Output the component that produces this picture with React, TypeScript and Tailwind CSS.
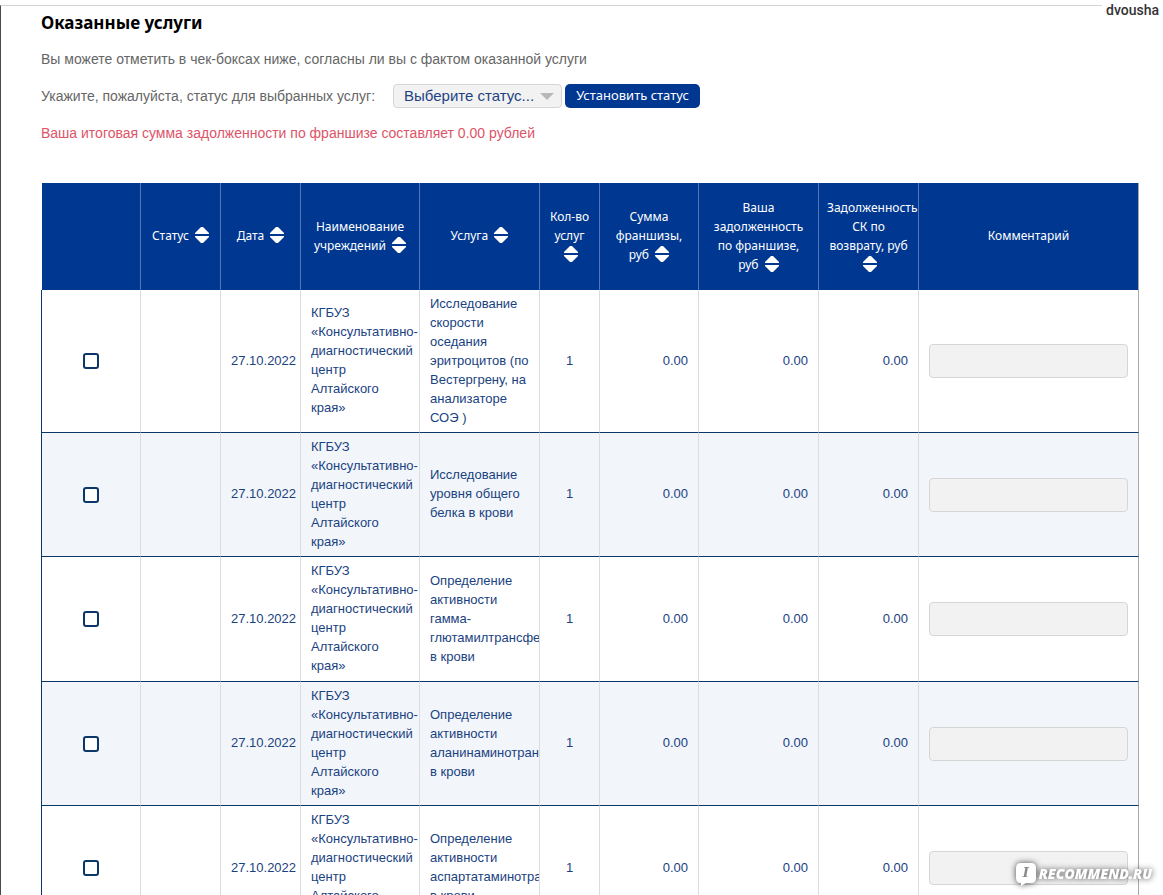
import clsx from "clsx";

const CLINIC = "КГБУЗ «Консультативно-диагностический центр Алтайского края»";

const COLUMNS = [
  { title: "", width: "w-[100px]", sortable: false },
  { title: "Статус", width: "w-[80px]", sortable: true },
  { title: "Дата", width: "w-[80px]", sortable: true },
  { title: "Наименование учреждений", width: "w-[119px]", sortable: true },
  { title: "Услуга", width: "w-[120px]", sortable: true },
  { title: "Кол-во услуг", width: "w-[60px]", sortable: true },
  { title: "Сумма франшизы, руб", width: "w-[99px]", sortable: true },
  { title: "Ваша задолженность по франшизе, руб", width: "w-[120px]", sortable: true },
  { title: "Задолженность СК по возврату, руб", width: "w-[100px]", sortable: true },
  { title: "Комментарий", width: "", sortable: false },
];

const SERVICES = [
  "Исследование скорости оседания эритроцитов (по Вестергрену, на анализаторе СОЭ )",
  "Исследование уровня общего белка в крови",
  "Определение активности гамма-глютамилтрансферазы в крови",
  "Определение активности аланинаминотрансферазы в крови",
  "Определение активности аспартатаминотрансферазы в крови",
];

function SortIcon() {
  return (
    <svg width="14" height="16" viewBox="0 0 14 16" fill="currentColor" className="ml-[3px] inline-block align-[-3px]" aria-hidden="true">
      <path d="M6 0h2l6 6v1H0V6z" />
      <path d="M0 9h14v1l-6 6H6l-6-6z" />
    </svg>
  );
}

function ServiceRow({ service, index }: { service: string; index: number }) {
  const cell = "border-r border-b border-r-[#dcdcdc] border-b-[#0b3768]";
  const text = clsx(cell, "pb-[2px]");
  const odd = index % 2 === 1;

  return (
    <tr className={clsx(index === 0 && "h-[143px]", odd && "h-[124px] bg-[#f2f6fb]", index > 0 && !odd && "h-[125px]")}>
      <td className={clsx(cell, "border-l border-l-[#0b3768]")}>
        <input
          type="checkbox"
          aria-label={service}
          className="mx-auto block size-4 appearance-none rounded-[3px] border-2 border-[#0b3768] bg-white checked:bg-[#0b3768]"
        />
      </td>
      <td className={cell} />
      <td className={clsx(text, "pl-[10px]")}>27.10.2022</td>
      <td className={clsx(text, "px-[10px]")}>{CLINIC}</td>
      <td className={clsx(text, "overflow-hidden px-[10px]")}>{service}</td>
      <td className={clsx(text, "text-center")}>1</td>
      <td className={clsx(text, "pr-[10px] text-right")}>0.00</td>
      <td className={clsx(text, "pr-[10px] text-right")}>0.00</td>
      <td className={clsx(text, "pr-[10px] text-right")}>0.00</td>
      <td className="border-r border-b border-r-[#a8a8a8] border-b-[#0b3768] px-[10px]">
        <input
          type="text"
          aria-label="Комментарий"
          className="block h-[34px] w-full rounded-[4px] border border-[#d6d6d6] bg-[#f2f2f2] px-2"
        />
      </td>
    </tr>
  );
}

function Watermark() {
  return (
    <div className="fixed right-[11px] bottom-[9px] flex items-center gap-[2px] text-white drop-shadow-[0_0_3px_#444]">
      <div className="relative h-[24px] w-[22px]">
        <svg viewBox="0 0 22 24" className="absolute inset-0" fill="currentColor" aria-hidden="true">
          <path d="M6 1h10q5 0 5 5v10q0 5-5 5h-5l-5 3v-3q-5 0-5-5V6q0-5 5-5z" />
        </svg>
        <span className="relative block text-center font-['DejaVu_Serif',serif] text-[13px] leading-[22px] font-bold text-[#8a8a8a] italic">
          I
        </span>
      </div>
      <span className="font-['Open_Sans',sans-serif] text-[14px] leading-[20px] font-extrabold italic">RECOMMEND.RU</span>
    </div>
  );
}

export default function App() {
  return (
    <div className="min-h-screen bg-white pt-[5px] font-['Liberation_Sans',Arial,sans-serif]">
      <div className="fixed top-0 right-0 z-10 bg-white px-[4px] font-[Roboto,sans-serif] text-[14px] leading-[20px] font-medium text-[#333]">
        dvousha
      </div>

      <main className="h-[calc(100vh-5px)] overflow-hidden border-t border-l border-t-[#d4d4d4] border-l-[#4a4a4a] pr-[24px] pl-[40px]">
        <h1 className="pt-[3px] font-['Noto_Sans',sans-serif] text-[17px] leading-[27px] font-bold text-black">
          Оказанные услуги
        </h1>

        <p className="mt-[13px] text-[14px] leading-[20px] text-[#666]">
          Вы можете отметить в чек-боксах ниже, согласны ли вы с фактом оказанной услуги
        </p>

        <div className="mt-[15px] flex h-6 items-center text-[14px] text-[#666]">
          <label htmlFor="status">Укажите, пожалуйста, статус для выбранных услуг:</label>
          <div className="relative ml-[18px]">
            <select
              id="status"
              className="block h-6 w-[169px] appearance-none rounded-[4px] border border-[#d6d6d6] bg-[#f2f2f2] pl-[10px] text-[15px] leading-[20px] text-[#1d4382]"
            >
              <option>Выберите статус...</option>
            </select>
            <svg width="14" height="7" viewBox="0 0 14 7" className="pointer-events-none absolute top-[9px] right-[8px]" fill="#b8b8b8" aria-hidden="true">
              <path d="M0 0h14L7 7z" />
            </svg>
          </div>
          <button
            type="button"
            className="ml-[3px] h-6 w-[135px] rounded-[5px] bg-[#003790] font-['Noto_Sans',sans-serif] text-[13px] whitespace-nowrap text-white"
          >
            Установить статус
          </button>
        </div>

        <p className="mt-[15px] text-[14px] leading-[20px] text-[#dd5468]">
          Ваша итоговая сумма задолженности по франшизе составляет 0.00 рублей
        </p>

        <table className="mt-[40px] w-full table-fixed border-separate border-spacing-0 text-[13px] leading-[19px] text-[#1a427f]">
          <thead>
            <tr className="h-[107px] bg-[#003790] font-['Noto_Sans',sans-serif] text-[12px] text-white">
              {COLUMNS.map((c, i) => (
                <th
                  key={i}
                  scope="col"
                  className={clsx(
                    c.width,
                    "border-r px-[8px] pb-[2px] font-normal",
                    i === 0 && "border-l border-l-white",
                    i === COLUMNS.length - 1 ? "border-r-[#a8a8a8]" : "border-r-[#4f78b5]",
                  )}
                >
                  {c.sortable ? (
                    <button type="button" className="w-full text-center">
                      {c.title} <SortIcon />
                    </button>
                  ) : (
                    c.title
                  )}
                </th>
              ))}
            </tr>
          </thead>
          <tbody>
            {SERVICES.map((s, i) => (
              <ServiceRow key={s} service={s} index={i} />
            ))}
          </tbody>
        </table>
      </main>

      <Watermark />
    </div>
  );
}
